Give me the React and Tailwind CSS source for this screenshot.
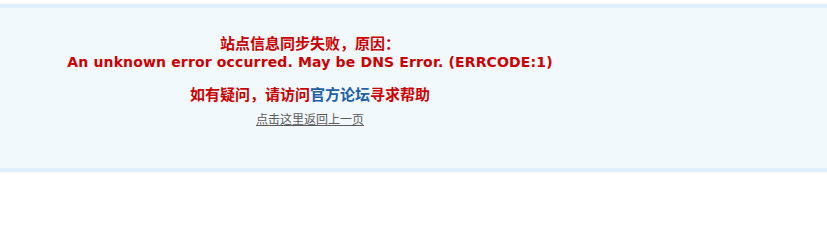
import React from "react";

const App = () => {
  return (
    <div className="w-[827px] h-[232px] bg-white pt-1">
      <div className="border-y-4 border-[#deeffa] bg-[#f2f9fd] h-[168px]">
        <div className="w-[620px] pt-[27px] text-center font-['DejaVu_Sans','Noto_Sans_CJK_SC',sans-serif]">
          <p className="text-[15px] leading-[18px] font-bold text-[#cc0000]">站点信息同步失败，原因：</p>
          <p className="text-[14px] leading-[18px] tracking-[0.15px] font-bold text-[#cc0000]">
            An unknown error occurred. May be DNS Error. (ERRCODE:1)
          </p>
          <p className="mt-[15px] text-[15px] leading-[18px] font-bold text-[#cc0000]">
            如有疑问，请访问<a href="#" className="text-[#1e5fa8]">官方论坛</a>寻求帮助
          </p>
          <p className="mt-[8px] text-[12px] leading-[16px]">
            <a href="#" className="text-[#5a5a5a] underline">点击这里返回上一页</a>
          </p>
        </div>
      </div>
    </div>
  );
};

export default App;
